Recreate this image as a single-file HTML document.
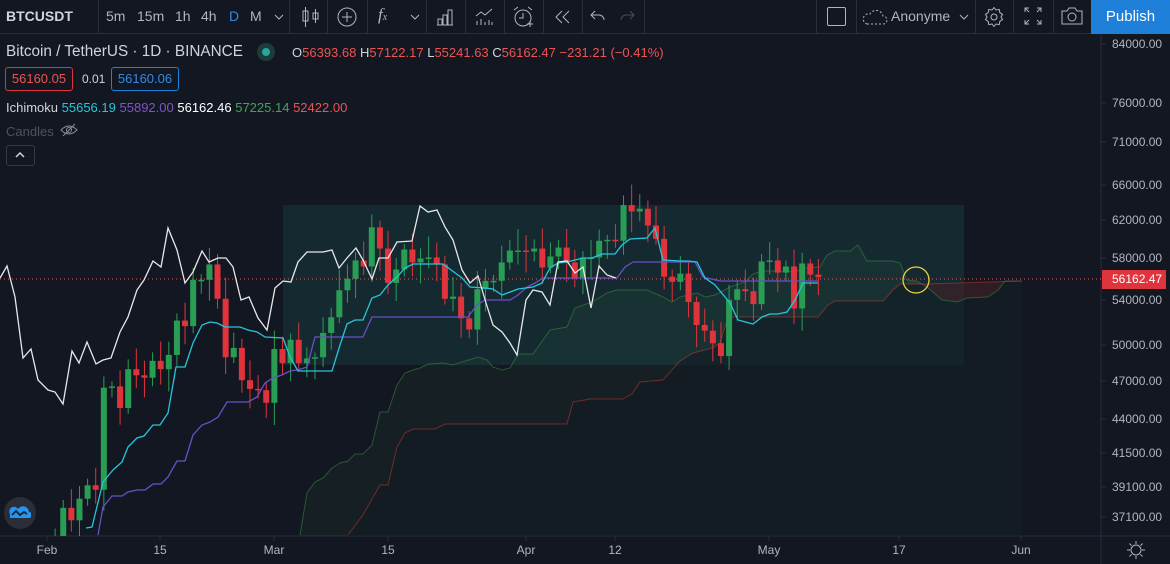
<!DOCTYPE html>
<html><head><meta charset="utf-8">
<style>
*{margin:0;padding:0;box-sizing:border-box}
html,body{width:1170px;height:564px;overflow:hidden}
body{background:#131722;font-family:"Liberation Sans",sans-serif;color:#d1d4dc;position:relative}
svg{display:block}
.tb{position:absolute;left:0;top:0;width:1170px;height:34px;border-bottom:1px solid #2a2e39;background:#131722}
.t{position:absolute;font-size:14px;top:8px;color:#b2b5be;white-space:nowrap}
.sep{position:absolute;top:0;width:1px;height:34px;background:#2a2e39}
.ab{position:absolute;white-space:nowrap}
.pl{position:absolute;left:1112px;font-size:12px;color:#b2b5be;transform:translateY(-7px)}
.tl{position:absolute;top:543px;font-size:12px;color:#b2b5be;transform:translateX(-50%)}
</style></head><body>
<div class="tb">
 <div class="t" style="left:6px;font-weight:bold;color:#d1d4dc">BTCUSDT</div>
 <div class="sep" style="left:98px"></div>
 <div class="t" style="left:106px">5m</div>
 <div class="t" style="left:137px">15m</div>
 <div class="t" style="left:175px">1h</div>
 <div class="t" style="left:201px">4h</div>
 <div class="t" style="left:229px;color:#2f8ae8">D</div>
 <div class="t" style="left:250px">M</div>
 <svg class="ab" style="left:274px;top:13px" width="10" height="8"><path d="M1 2l4 4 4-4" stroke="#b2b5be" fill="none"/></svg>
 <div class="sep" style="left:289px"></div>
 <svg class="ab" style="left:300px;top:6px" width="20" height="22" fill="none" stroke="#b2b5be"><path d="M5.5 1v20M15.5 3v14"/><rect x="3" y="5" width="5" height="10"/><rect x="13" y="7" width="5" height="6"/></svg>
 <div class="sep" style="left:327px"></div>
 <svg class="ab" style="left:336px;top:6px" width="22" height="22" fill="none" stroke="#b2b5be"><circle cx="11" cy="11" r="9"/><path d="M11 6v10M6 11h10"/></svg>
 <div class="sep" style="left:367px"></div>
 <div class="t" style="left:378px;font-style:italic;font-family:'Liberation Serif',serif;font-size:17px;top:5px">f<span style="font-size:10px">x</span></div>
 <svg class="ab" style="left:410px;top:13px" width="10" height="8"><path d="M1 2l4 4 4-4" stroke="#b2b5be" fill="none"/></svg>
 <div class="sep" style="left:426px"></div>
 <svg class="ab" style="left:435px;top:7px" width="20" height="20" fill="none" stroke="#b2b5be"><path d="M2 18h16M3 18v-6h4v6M8 18V8h4v10M13 18V3h4v15"/></svg>
 <div class="sep" style="left:465px"></div>
 <svg class="ab" style="left:474px;top:6px" width="20" height="20" fill="none" stroke="#b2b5be"><path d="M2 10l5-4 4 3 7-6M3 19v-4M7 19v-6M11 19v-3M15 19v-5M18 19v-3"/></svg>
 <div class="sep" style="left:504px"></div>
 <svg class="ab" style="left:512px;top:5px" width="22" height="24" fill="none" stroke="#b2b5be"><circle cx="11" cy="13" r="8"/><path d="M11 8v5h-4M2 5l4-3M20 5l-4-3M15 19h6M18 16v6"/></svg>
 <div class="sep" style="left:543px"></div>
 <svg class="ab" style="left:554px;top:10px" width="18" height="14" fill="none" stroke="#b2b5be"><path d="M8 1L2 7l6 6M15 1L9 7l6 6"/></svg>
 <div class="sep" style="left:582px"></div>
 <svg class="ab" style="left:590px;top:9px" width="16" height="14" fill="none" stroke="#b2b5be"><path d="M5 2L1 6l4 4M1 6h8a5 5 0 0 1 5 5"/></svg>
 <svg class="ab" style="left:619px;top:9px" width="16" height="14" fill="none" stroke="#4a4e59"><path d="M11 2l4 4-4 4M15 6H7a5 5 0 0 0-5 5"/></svg>
 <div class="sep" style="left:644px"></div>
 <div class="sep" style="left:816px"></div>
 <div class="ab" style="left:827px;top:7px;width:19px;height:19px;border:1px solid #b2b5be;border-radius:2px"></div>
 <div class="sep" style="left:856px"></div>
 <svg class="ab" style="left:862px;top:7px" width="26" height="18" fill="none" stroke="#b2b5be" stroke-dasharray="2 2"><path d="M5 17h16a4 4 0 0 0 0-8 7 7 0 0 0-13-2A5 5 0 0 0 5 17z"/></svg>
 <div class="t" style="left:891px;top:8px">Anonyme</div>
 <svg class="ab" style="left:959px;top:13px" width="10" height="8"><path d="M1 2l4 4 4-4" stroke="#b2b5be" fill="none"/></svg>
 <div class="sep" style="left:975px"></div>
 <svg class="ab" style="left:983px;top:6px" width="22" height="22" fill="none" stroke="#b2b5be"><path d="M11 1.5l2 2.5 3.2-.6.6 3.2 2.7 1.8-1.5 2.6 1.5 2.6-2.7 1.8-.6 3.2-3.2-.6-2 2.5-2-2.5-3.2.6-.6-3.2-2.7-1.8 1.5-2.6-1.5-2.6 2.7-1.8.6-3.2 3.2.6z"/><circle cx="11" cy="11" r="3"/></svg>
 <div class="sep" style="left:1013px"></div>
 <svg class="ab" style="left:1024px;top:7px" width="18" height="18" fill="none" stroke="#b2b5be"><path d="M1 5V1h4M1 1l4 4M17 5V1h-4M17 1l-4 4M1 13v4h4M1 17l4-4M17 13v4h-4M17 17l-4-4"/></svg>
 <div class="sep" style="left:1053px"></div>
 <svg class="ab" style="left:1060px;top:6px" width="24" height="20" fill="none" stroke="#b2b5be"><path d="M2 5h5l2-3h6l2 3h5v13H2z"/><circle cx="12" cy="11" r="4"/></svg>
 <div class="ab" style="left:1091px;top:0;width:79px;height:34px;background:#1e80d8;color:#fff;font-size:15px;line-height:33px;text-align:center">Publish</div>
</div>

<svg class="ab" style="left:0;top:35px" width="1170" height="529" id="ch"></svg>

<div class="ab" style="left:6px;top:43px;font-size:15.3px;color:#d1d4dc">Bitcoin / TetherUS · 1D · BINANCE</div>
<div class="ab" style="left:257px;top:43px;width:18px;height:18px;border-radius:9px;background:#1f3a3a"></div>
<div class="ab" style="left:262px;top:48px;width:8px;height:8px;border-radius:4px;background:#26a69a"></div>
<div class="ab" style="left:292px;top:45px;font-size:13px;color:#d1d4dc">O<span style="color:#ef5350">56393.68</span> H<span style="color:#ef5350">57122.17</span> L<span style="color:#ef5350">55241.63</span> C<span style="color:#ef5350">56162.47 −231.21 (−0.41%)</span></div>
<div class="ab" style="left:5px;top:67px;width:68px;height:24px;border:1px solid #e0343c;border-radius:3px;color:#ef5350;font-size:13px;text-align:center;line-height:22px">56160.05</div>
<div class="ab" style="left:82px;top:72px;font-size:12px;color:#d1d4dc">0.01</div>
<div class="ab" style="left:111px;top:67px;width:68px;height:24px;border:1px solid #1e80d8;border-radius:3px;color:#2f8ae8;font-size:13px;text-align:center;line-height:22px">56160.06</div>
<div class="ab" style="left:6px;top:100px;font-size:13px;color:#d1d4dc">Ichimoku <span style="color:#26c6da">55656.19</span> <span style="color:#7e57c2">55892.00</span> <span style="color:#fff">56162.46</span> <span style="color:#43a45a">57225.14</span> <span style="color:#ef5350">52422.00</span></div>
<div class="ab" style="left:6px;top:124px;font-size:13px;color:#4e525d">Candles</div>
<svg class="ab" style="left:60px;top:123px" width="18" height="14" fill="none" stroke="#8a8e99"><path d="M1 7q8-8 16 0q-8 8-16 0z"/><circle cx="9" cy="7" r="2.5"/><path d="M3 13L15 1"/></svg>
<div class="ab" style="left:6px;top:145px;width:29px;height:21px;border:1px solid #363a45;border-radius:3px"></div>
<svg class="ab" style="left:15px;top:152px" width="10" height="7"><path d="M1 5l4-4 4 4" stroke="#d1d4dc" stroke-width="1.5" fill="none"/></svg>

<div class="pl" style="top:44px">84000.00</div>
<div class="pl" style="top:103px">76000.00</div>
<div class="pl" style="top:142px">71000.00</div>
<div class="pl" style="top:185px">66000.00</div>
<div class="pl" style="top:220px">62000.00</div>
<div class="pl" style="top:258px">58000.00</div>
<div class="pl" style="top:300px">54000.00</div>
<div class="pl" style="top:345px">50000.00</div>
<div class="pl" style="top:381px">47000.00</div>
<div class="pl" style="top:419px">44000.00</div>
<div class="pl" style="top:453px">41500.00</div>
<div class="pl" style="top:487px">39100.00</div>
<div class="pl" style="top:517px">37100.00</div>
<div class="ab" style="left:1102px;top:270px;width:64px;height:19px;background:#e0343c;color:#fff;font-size:12px;line-height:19px;padding-left:10px">56162.47</div>

<div class="tl" style="left:47px">Feb</div>
<div class="tl" style="left:160px">15</div>
<div class="tl" style="left:274px">Mar</div>
<div class="tl" style="left:388px">15</div>
<div class="tl" style="left:526px">Apr</div>
<div class="tl" style="left:615px">12</div>
<div class="tl" style="left:769px">May</div>
<div class="tl" style="left:899px">17</div>
<div class="tl" style="left:1021px">Jun</div>
<svg class="ab" style="left:1127px;top:541px" width="18" height="18" fill="none" stroke="#b2b5be"><circle cx="9" cy="9" r="5"/><path d="M9 0v3M9 15v3M0 9h3M15 9h3M2.5 2.5l2 2M13.5 13.5l2 2M2.5 15.5l2-2M13.5 4.5l2-2"/></svg>

<div class="ab" style="left:4px;top:497px;width:32px;height:32px;border-radius:16px;background:#2a2e39"></div>
<svg class="ab" style="left:9px;top:505px" width="22" height="15"><path d="M1 13h19a3 3 0 0 0 0-6 6 6 0 0 0-11-3 4 4 0 0 0-8 5z" fill="#2196f3"/><path d="M3 10l4-4 4 4 4-3 3 2" stroke="#1e2230" stroke-width="1.8" fill="none"/></svg>

<script>
const S=document.getElementById('ch');let h='';
const Y=p=>44+579*Math.log(84000/p)-35;
const P=a=>a.map(q=>q[0]+','+(q[1]-35)).join(' ');
h+='<defs><clipPath id="c"><rect x="0" y="0" width="1101" height="501"/></clipPath></defs>';
h+='<line x1="1101" y1="0" x2="1101" y2="529" stroke="#2a2e39"/><line x1="0" y1="501" x2="1170" y2="501" stroke="#2a2e39"/>';
[44,103,142,185,220,258,300,345,381,419,453,487,517].forEach(y=>h+=`<line x1="1101" x2="1106" y1="${y-35}" y2="${y-35}" stroke="#2a2e39"/>`);
[47,160,274,388,526,615,769,899,1021].forEach(x=>h+=`<line x1="${x}" x2="${x}" y1="501" y2="506" stroke="#2a2e39"/>`);
h+='<g clip-path="url(#c)">';
h+='<rect x="283" y="170" width="681" height="160" fill="rgba(33,150,143,0.15)"/>';
const A=[[300,535],[307,493],[315,482],[323,478],[332,468],[340,463],[348,461],[355,454],[363,454],[372,445],[380,412],[388,412],[397,385],[405,373],[413,370],[420,368],[428,364],[443,363],[453,365],[462,362],[478,357],[487,360],[493,367],[502,370],[510,368],[518,354],[533,354],[550,330],[567,327],[575,308],[592,302],[607,293],[617,290],[647,290],[663,297],[672,302],[680,297],[697,293],[705,297],[715,295],[730,287],[745,282],[753,274],[762,271],[787,271],[795,272],[803,268],[820,267],[827,255],[835,251],[850,251],[858,245],[867,261],[882,261],[892,261],[900,263],[907,280],[917,281],[927,287],[942,300],[957,302],[967,298],[988,297],[998,290],[1005,281],[1022,281]];
const B=[[348,535],[363,515],[380,485],[388,485],[397,447],[405,433],[413,429],[435,429],[445,424],[567,424],[573,402],[590,399],[623,399],[632,394],[640,382],[663,380],[680,361],[693,353],[712,348],[720,343],[728,317],[818,317],[828,305],[835,301],[883,301],[893,290],[900,284],[927,284],[1022,281]];
h+=`<polygon points="${P(A.concat([[1022,281],[1022,560],[300,560]]))}" fill="rgba(67,160,71,0.07)"/>`;
h+=`<polygon points="${P(B.concat([[1022,560],[348,560]]))}" fill="#131722" opacity="0.55"/>`;
h+=`<polygon points="${P([[907,280],[917,281],[927,287],[942,300],[957,302],[967,298],[988,297],[998,290],[1005,281],[1022,281],[927,284],[907,284]])}" fill="rgba(244,67,54,0.13)"/>`;
h+=`<polyline points="${P(A)}" fill="none" stroke="rgba(67,160,71,0.45)"/>`;
h+=`<polyline points="${P(B)}" fill="none" stroke="rgba(244,67,54,0.4)"/>`;
h+=`<line x1="0" x2="1101" y1="${279-35}" y2="${279-35}" stroke="#ef5350" stroke-dasharray="1 3"/>`;
const C=[34300,34300,33100,33500,35500,37700,36900,38300,39200,38900,46400,46500,44800,47900,47400,47200,48600,47900,49100,52100,51600,55900,55900,57400,54100,48900,49700,47000,46300,46200,45200,49600,48400,50400,48400,48800,48900,51000,52400,54900,56000,57800,57200,61200,59000,55600,56900,58900,57600,58000,58100,57400,54100,54300,52300,51300,55000,55800,55800,57600,58800,58800,58700,59000,57100,58200,59100,57600,56000,58100,58100,59800,59900,59800,63600,62900,63200,61400,60000,56200,55700,56500,53800,51700,51200,50100,49000,54000,55000,54800,53600,57700,57800,56600,57200,53200,57500,56400,56160];
let o=33000;
C.forEach((c,i)=>{const x=47+(i-3)*8.12;const s=i*7919%97/97;const hi=Math.max(o,c)*(1.008+0.03*s),lo=Math.min(o,c)*(0.99-0.03*((i*31)%13)/13);
const col=c>=o?'#2a9d55':'#e0343c';const yt=Y(Math.max(o,c)),yb=Y(Math.min(o,c));
h+=`<line x1="${x}" x2="${x}" y1="${Y(hi)}" y2="${Y(lo)}" stroke="${col}"/><rect x="${x-3}" y="${yt}" width="6" height="${Math.max(1.5,yb-yt)}" fill="${col}"/>`;o=c;});
const K=[[98,535],[103,507],[112,496],[122,496],[128,492],[137,490],[145,490],[153,484],[161,484],[168,477],[177,461],[185,461],[193,435],[202,425],[210,422],[218,417],[227,402],[248,402],[257,397],[265,383],[273,378],[282,375],[290,371],[298,370],[307,367],[315,337],[363,337],[372,317],[468,317],[477,305],[485,300],[510,300],[518,295],[527,287],[535,283],[543,278],[617,278],[625,267],[633,262],[695,262],[703,277],[720,281],[818,281]];
const T=[[86,528],[92,527],[103,482],[113,470],[122,462],[128,447],[137,438],[144,436],[153,425],[160,425],[168,413],[176,367],[185,367],[193,343],[202,325],[210,322],[217,323],[225,327],[240,327],[248,330],[257,332],[265,337],[283,338],[290,357],[298,371],[332,371],[340,345],[347,324],[355,320],[363,320],[372,298],[380,295],[388,285],[397,277],[405,268],[413,264],[443,264],[462,278],[470,287],[485,288],[493,289],[502,295],[510,292],[518,289],[533,287],[542,283],[550,268],[558,263],[567,262],[575,260],[583,258],[592,258],[602,254],[615,254],[622,245],[630,239],[647,238],[655,228],[663,260],[680,261],[688,261],[697,262],[705,278],[715,285],[730,303],[738,320],[753,324],[762,317],[770,314],[778,314],[787,312],[795,300],[803,283],[818,283]];
const W=[[0,278],[7,266],[15,297],[23,358],[31,349],[38,380],[48,390],[55,392],[63,404],[72,351],[79,363],[87,342],[96,364],[103,360],[111,358],[120,332],[128,317],[137,290],[144,280],[153,261],[161,267],[168,228],[177,250],[185,283],[193,272],[202,251],[209,262],[218,258],[226,258],[233,267],[241,300],[249,297],[258,318],[267,330],[275,288],[283,281],[291,282],[298,262],[307,252],[323,252],[332,250],[339,268],[347,258],[356,248],[363,260],[372,279],[379,258],[388,258],[397,242],[412,241],[420,206],[428,212],[437,210],[445,227],[453,240],[462,270],[470,283],[478,276],[486,303],[493,325],[502,332],[510,343],[517,355],[526,300],[533,290],[542,292],[550,305],[558,262],[567,261],[575,273],[583,267],[591,308],[599,266],[607,275],[616,278]];
h+=`<polyline points="${P(K)}" fill="none" stroke="#6a4fc8" stroke-width="1.3"/>`;
h+=`<polyline points="${P(T)}" fill="none" stroke="#26c6da" stroke-width="1.3"/>`;
h+=`<polyline points="${P(W)}" fill="none" stroke="#e8e8ec" stroke-width="1.3"/>`;
h+=`<circle cx="916" cy="${280-35}" r="13" fill="none" stroke="#e6d33b" stroke-width="1.3"/>`;
h+='</g>';
S.innerHTML=h;
</script>
</body></html>
